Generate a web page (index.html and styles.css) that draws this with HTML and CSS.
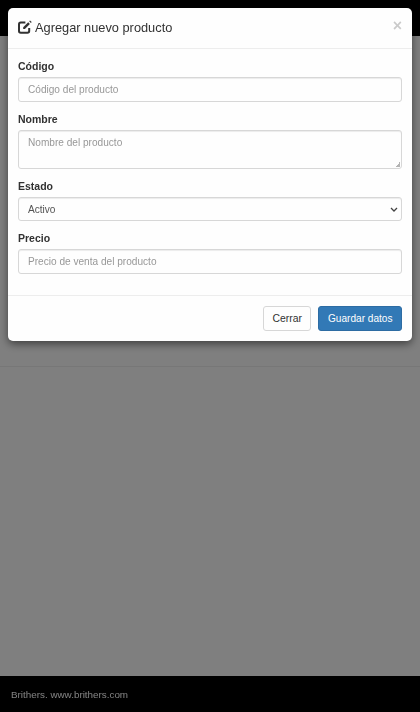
FILE: index.html
```html
<!DOCTYPE html>
<html lang="es">
<head>
<meta charset="utf-8">
<title>Agregar nuevo producto</title>
<link rel="stylesheet" href="styles.css">
</head>
<body>
<div class="page">
  <div class="navbar"></div>
  <div class="content"><div class="rule"></div></div>
  <footer class="footer"><span class="footer-text">Brithers. www.brithers.com</span></footer>
</div>
<div class="backdrop"></div>
<div class="modal">
  <div class="modal-header">
    <h4 class="title">
      <svg class="icon" viewBox="0 0 14 14" width="14" height="14" aria-hidden="true">
        <path d="M11.2 8v3a1.8 1.8 0 0 1-1.8 1.8H2.8A1.8 1.8 0 0 1 1 11V4.4a1.8 1.8 0 0 1 1.8-1.8h4.6" fill="none" stroke="#333" stroke-width="2"/>
        <path d="M5.200 7.200 10.200 2.200l1.700 1.700-5 5H5.200z" fill="#333"/>
        <path d="M11.200 1.200l.8-.8 1.700 1.700-.8.8z" fill="#333"/>
      </svg>
      Agregar nuevo producto
    </h4>
    <span class="close">×</span>
  </div>
  <form class="modal-body">
    <div class="group">
      <label class="label">Código</label>
      <input class="control" type="text" placeholder="Código del producto">
    </div>
    <div class="group">
      <label class="label">Nombre</label>
      <textarea class="control area" placeholder="Nombre del producto"></textarea>
    </div>
    <div class="group">
      <label class="label">Estado</label>
      <div class="select-wrap">
        <select class="control"><option>Activo</option></select>
        <svg class="chevron" viewBox="0 0 8 5" width="8" height="5" aria-hidden="true"><path d="M1 1l3 3 3-3" fill="none" stroke="#444" stroke-width="1.3"/></svg>
      </div>
    </div>
    <div class="group">
      <label class="label">Precio</label>
      <input class="control" type="text" placeholder="Precio de venta del producto">
    </div>
  </form>
  <div class="modal-footer">
    <button class="btn btn-default" type="button">Cerrar</button>
    <button class="btn btn-primary" type="button">Guardar datos</button>
  </div>
</div>
</body>
</html>
```
FILE: styles.css
```css
* { box-sizing: border-box; }
html, body { margin: 0; height: 100%; }
body {
  font-family: "Liberation Sans", Arial, sans-serif;
  font-size: 10.1px;
  color: #333;
  background: #fff;
  overflow: hidden;
}
.page { display: flex; flex-direction: column; height: 712px; }
.navbar { height: 36px; background: #000; flex: none; }
.content { flex: 1; padding-top: 330px; }
.rule { height: 1px; background: #eee; }
.footer {
  flex: none;
  height: 36px;
  background: #000;
  padding: 12px 11px 0;
  font-size: 9.85px;
  line-height: 13px;
}
.footer-text { display: inline-block; color: #fff; will-change: transform; }
.backdrop { position: fixed; inset: 0; background: #000; opacity: .5; }
.modal {
  position: fixed;
  top: 8px;
  left: 8px;
  width: 404px;
  height: 333px;
  background: #fff;
  border-radius: 5px;
  box-shadow: 0 3px 9px rgba(0,0,0,.5);
  display: flex;
  flex-direction: column;
  opacity: .999;
}
.modal-header {
  height: 41px;
  flex: none;
  border-bottom: 1px solid #eee;
  display: flex;
  justify-content: space-between;
  padding: 10px 10px 0;
}
.title {
  margin: 0;
  font-size: 12.8px;
  font-weight: 400;
  line-height: 20px;
  display: flex;
  align-items: center;
  height: 20px;
  gap: 3px;
}
.icon { flex: none; position: relative; top: -1px; }
.close {
  font-size: 16px;
  font-weight: 700;
  color: #000;
  opacity: .2;
  line-height: 16px;
  height: 16px;
}
.modal-body { flex: 1; padding: 10px 10px 0; }
.group { margin-bottom: 10px; }
.label {
  display: block;
  font-size: 10.5px;
  font-weight: 700;
  line-height: 15px;
  margin-bottom: 3px;
  color: #333;
}
.control {
  display: block;
  width: 100%;
  height: 24.5px;
  padding: 4px 9px;
  font-family: inherit;
  font-size: 10.1px;
  line-height: 15px;
  color: #555;
  background: #fff;
  border: 1px solid #d8d8d8;
  border-radius: 3px;
  box-shadow: inset 0 1px 1px rgba(0,0,0,.075);
  margin: 0;
}
.control::placeholder { color: #999; opacity: 1; }
.area { height: 39px; resize: vertical; }
.area::-webkit-resizer {
  background: linear-gradient(135deg, transparent 50%, #b5b5b5 50%) no-repeat right 1px bottom 1px / 5px 5px;
}
.select-wrap { position: relative; }
select.control { padding: 4px 9px; appearance: none; }
.chevron { position: absolute; right: 4px; top: 10px; }
.modal-footer {
  flex: none;
  height: 46px;
  border-top: 1px solid #eee;
  display: flex;
  justify-content: flex-end;
  gap: 7px;
  padding: 10px 10px 0;
}
.btn {
  height: 24.5px;
  padding: 0 8.5px;
  font-family: inherit;
  font-size: 10.1px;
  line-height: 15px;
  border: 1px solid;
  border-radius: 3px;
}
.btn-default { color: #333; background: #fff; border-color: #d8d8d8; font-size: 10.4px; }
.btn-primary { color: #fff; background: #337ab7; border-color: #2e6da4; }
```
